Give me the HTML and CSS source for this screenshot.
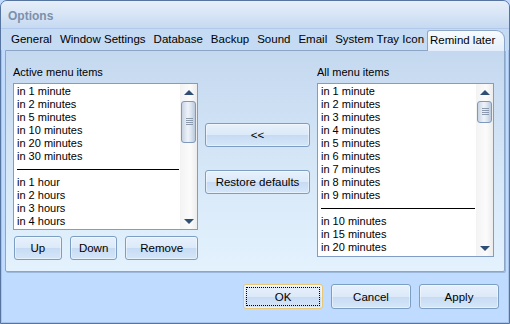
FILE: index.html
```html
<!DOCTYPE html>
<html lang="en">
<head>
    <meta charset="UTF-8">
    <title>Options</title>
    <link rel="stylesheet" href="styles.css">
</head>
<body>
    <div class="window">
        <div class="titlebar">Options</div>

        <div class="tabs">
            <span class="tab">General</span>
            <span class="tab">Window Settings</span>
            <span class="tab">Database</span>
            <span class="tab">Backup</span>
            <span class="tab">Sound</span>
            <span class="tab">Email</span>
            <span class="tab">System Tray Icon</span>
            <span class="tab active">Remind later</span>
        </div>

        <div class="pane">
            <div class="col-left">
                <div class="label">Active menu items</div>
                <div class="listbox list-active">
                    <div class="items">
                        <div class="item">in 1 minute</div>
                        <div class="item">in 2 minutes</div>
                        <div class="item">in 5 minutes</div>
                        <div class="item">in 10 minutes</div>
                        <div class="item">in 20 minutes</div>
                        <div class="item">in 30 minutes</div>
                        <div class="item sep"></div>
                        <div class="item">in 1 hour</div>
                        <div class="item">in 2 hours</div>
                        <div class="item">in 3 hours</div>
                        <div class="item">in 4 hours</div>
                    </div>
                    <div class="scrollbar">
                        <span class="arrow up"></span>
                        <div class="track">
                            <div class="thumb thumb-active"><span class="grip"></span></div>
                        </div>
                        <span class="arrow down"></span>
                    </div>
                </div>
                <div class="list-buttons">
                    <button class="btn btn-up">Up</button>
                    <button class="btn btn-down">Down</button>
                    <button class="btn btn-remove">Remove</button>
                </div>
            </div>

            <div class="col-middle">
                <button class="btn btn-mid">&lt;&lt;</button>
                <button class="btn btn-mid">Restore defaults</button>
            </div>

            <div class="col-right">
                <div class="label">All menu items</div>
                <div class="listbox list-all">
                    <div class="items">
                        <div class="item">in 1 minute</div>
                        <div class="item">in 2 minutes</div>
                        <div class="item">in 3 minutes</div>
                        <div class="item">in 4 minutes</div>
                        <div class="item">in 5 minutes</div>
                        <div class="item">in 6 minutes</div>
                        <div class="item">in 7 minutes</div>
                        <div class="item">in 8 minutes</div>
                        <div class="item">in 9 minutes</div>
                        <div class="item sep"></div>
                        <div class="item">in 10 minutes</div>
                        <div class="item">in 15 minutes</div>
                        <div class="item">in 20 minutes</div>
                    </div>
                    <div class="scrollbar">
                        <span class="arrow up"></span>
                        <div class="track">
                            <div class="thumb thumb-all"><span class="grip"></span></div>
                        </div>
                        <span class="arrow down"></span>
                    </div>
                </div>
            </div>
        </div>

        <div class="footer">
            <button class="btn btn-dlg default"><span class="focus">OK</span></button>
            <button class="btn btn-dlg">Cancel</button>
            <button class="btn btn-dlg">Apply</button>
        </div>
    </div>
</body>
</html>
```

FILE: styles.css
```css
body {
    margin: 0;
    font-family: 'Liberation Sans', Arial, sans-serif;
    font-size: 11px;
    color: #000;
    background: #bfdbff;
}
.window {
    width: 510px;
    height: 324px;
    box-sizing: border-box;
    border: 1px solid #5674a0;
    border-radius: 7px 7px 0 0;
    background: #bfdbff;
    box-shadow: inset 1px 1px 0 #a9c3e6, inset -1px -1px 0 #a9c3e6;
    overflow: hidden;
}
.titlebar {
    height: 27px;
    line-height: 30px;
    padding-left: 7px;
    font-size: 12px;
    font-weight: bold;
    color: #7d8fa9;
    background: linear-gradient(#e6eef9, #d7e5f6 50%, #c6d9f1);
    border-bottom: 1px solid #b1c9ea;
}
.tabs {
    display: flex;
    height: 21px;
    padding-left: 6px;
    background: #c5daf3;
    align-items: flex-end;
    white-space: nowrap;
}
.tab {
    padding: 0 4px 4px 4px;
    line-height: 13px;
    font-size: 11.5px;
}
.tab:nth-child(7) {
    padding-right: 2px;
}
.tab.active {
    position: relative;
    top: 1px;
    margin-left: 1px;
    padding: 3px 9px 4px 2px;
    background: linear-gradient(#f7fbff, #e4eefa);
    border: 1px solid #8ca6c8;
    border-bottom: none;
    border-radius: 3px 9px 0 0;
}
.pane {
    display: flex;
    height: 222px;
    margin: 0 4px 0 4px;
    padding: 15px 0 0 7px;
    box-sizing: border-box;
    border: 1px solid #8ca6c8;
    border-radius: 0 0 2px 2px;
    background: linear-gradient(#c4d8ef, #d5e6f7 50%, #e3f2fd);
    box-shadow: 1px 1px 0 #9eb8da;
}
.label {
    height: 14px;
    line-height: 12px;
    margin-bottom: 3px;
}
.col-left {
    width: 185px;
}
.col-middle {
    display: flex;
    flex-direction: column;
    gap: 23px;
    width: 105px;
    margin: 57px 7px 0 7px;
}
.col-right {
    width: 177px;
}
.listbox {
    display: flex;
    box-sizing: border-box;
    background: #fff;
    border: 1px solid #7f9dc5;
}
.list-active {
    height: 147px;
}
.list-all {
    height: 174px;
}
.items {
    flex: 1;
    padding: 1px 0 0 3px;
    overflow: hidden;
}
.item {
    height: 13px;
    line-height: 13px;
    white-space: nowrap;
}
.item.sep {
    position: relative;
}
.item.sep::after {
    content: "";
    position: absolute;
    left: 0;
    right: 1px;
    top: 6px;
    border-top: 1px solid #000;
}
.scrollbar {
    display: flex;
    flex-direction: column;
    width: 17px;
    background: linear-gradient(90deg, #f3f3f3, #fbfbfb 60%, #ececec);
}
.arrow {
    height: 17px;
    position: relative;
}
.arrow::after {
    content: "";
    position: absolute;
    left: 4px;
    border-left: 5px solid transparent;
    border-right: 5px solid transparent;
}
.arrow.up::after {
    top: 6px;
    border-bottom: 5px solid #2e4e76;
}
.arrow.down::after {
    top: 7px;
    border-top: 5px solid #2e4e76;
}
.track {
    flex: 1;
}
.thumb {
    position: relative;
    margin: 0 1px;
    box-sizing: border-box;
    border: 1px solid #7e99bd;
    border-radius: 3px;
    background: linear-gradient(90deg, #c8d4e3, #eef3f9 45%, #dbe4ef 70%, #b9c9dc);
}
.thumb-active {
    height: 42px;
}
.thumb-all {
    height: 22px;
}
.grip {
    position: absolute;
    left: 4px;
    top: 50%;
    width: 7px;
    height: 7px;
    margin-top: -4px;
    background: repeating-linear-gradient(#8a99ac 0 1px, transparent 1px 2px);
}
.list-buttons {
    display: flex;
    gap: 8px;
    margin-top: 6px;
    padding-left: 1px;
}
.btn {
    display: flex;
    align-items: center;
    justify-content: center;
    height: 24px;
    padding: 0;
    box-sizing: border-box;
    font-family: 'Liberation Sans', Arial, sans-serif;
    font-size: 11.5px;
    color: #000;
    border: 1px solid #7d9ec3;
    border-radius: 3px;
    background: linear-gradient(#e7f1fc, #dce9f8 50%, #c6dbf3 51%, #d5e6f8);
    box-shadow: inset 0 0 0 1px rgba(255, 255, 255, 0.45);
}
.btn-up {
    width: 48px;
}
.btn-down {
    width: 48px;
}
.btn-remove {
    width: 73px;
}
.btn-mid {
    width: 105px;
}
.footer {
    display: flex;
    justify-content: flex-end;
    gap: 8px;
    padding: 12px 10px 0 0;
}
.btn-dlg {
    width: 80px;
    height: 25px;
}
.btn.default {
    border-color: #e8c874;
    padding: 2px;
}
.focus {
    flex: 1;
    align-self: stretch;
    display: flex;
    align-items: center;
    justify-content: center;
    border: 1px dotted #000;
}
```
